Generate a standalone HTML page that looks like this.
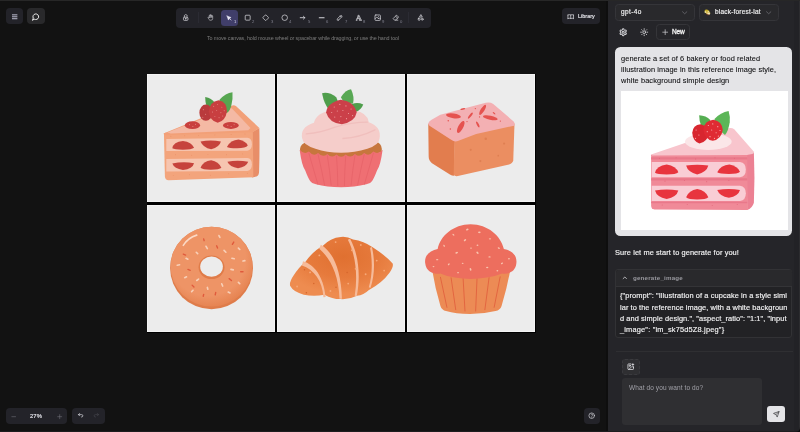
<!DOCTYPE html>
<html>
<head>
<meta charset="utf-8">
<style>
*{box-sizing:border-box;margin:0;padding:0}
html,body{width:800px;height:432px;overflow:hidden;background:#121212;font-family:"Liberation Sans",sans-serif;}
body{position:relative}
.abs{position:absolute}
#topstrip{left:0;top:0;width:800px;height:1px;background:#272727}
#canvas{left:0;top:1px;width:606px;height:431px;background:#121212}
#sep{left:606.3px;top:1px;width:1.7px;height:431px;background:#0e0e0e}
#panel{left:608px;top:1px;width:192px;height:431px;background:#252529}
#scroll{left:793.6px;top:1px;width:6.4px;height:431px;background:#222226;border-right:1.2px solid #2c2c2f}
.btn{background:#232329;border-radius:4px}
.ico{position:absolute;overflow:visible}
.t{position:absolute;white-space:nowrap;line-height:1;will-change:transform;-webkit-font-smoothing:antialiased}
#grid{left:146.5px;top:73.5px;width:389px;height:259px;background:#000}
.tile{position:absolute;width:128px;background:#ececec;box-shadow:inset 0 0 0 0.5px #fafafa}
.sel{background:#29292c;border:0.6px solid #353539;border-radius:3.5px}
.utx{font-size:7.4px;color:#0c0c0e;-webkit-text-stroke:0.08px #0c0c0e}
.ttx{font-size:7.4px;color:#f4f4f5;-webkit-text-stroke:0.15px #f4f4f5}
.kn{top:19.5px;font-size:4.2px;color:#82828f}
</style>
</head>
<body>
<div id="canvas" class="abs"></div>
<div id="topstrip" class="abs"></div>
<div id="sep" class="abs"></div>
<div id="panel" class="abs"></div>
<div id="scroll" class="abs"></div>
<div class="abs" style="left:0;top:431px;width:800px;height:1px;background:#1d1d1f"></div>
<svg class="ico" style="left:795px;top:427px;width:5px;height:5px" viewBox="0 0 5 5"><path d="M5 0 L5 5 L0 5 Q5 5 5 0Z" fill="#0c0c0c"/></svg>

<!-- top-left buttons -->
<div class="abs btn" style="left:5.8px;top:7.8px;width:17.2px;height:16.6px"></div>
<div class="abs btn" style="left:26.6px;top:7.8px;width:18.4px;height:16.6px;background:#29292b"></div>

<!-- toolbar -->
<div class="abs btn" id="toolbar" style="left:176px;top:7.7px;width:255px;height:20.3px"></div>
<div class="abs" style="left:221px;top:10px;width:17px;height:15.5px;background:#403e6a;border-radius:3.5px"></div>

<!-- hint -->
<div class="t" id="hint" style="left:206.9px;top:35.7px;font-size:5.4px;color:#7b7b7b;letter-spacing:-0.127px">To move canvas, hold mouse wheel or spacebar while dragging, or use the hand tool</div>

<!-- library -->
<div class="abs btn" style="left:562.2px;top:8px;width:37.9px;height:16.4px"></div>

<!-- grid -->
<div id="grid" class="abs">
  <div class="tile" style="left:0.5px;top:0.5px;height:128px"></div>
  <div class="tile" style="left:130.5px;top:0.5px;height:128px"></div>
  <div class="tile" style="left:260.5px;top:0.5px;height:128px"></div>
  <div class="tile" style="left:0.5px;top:131.5px;height:127px"></div>
  <div class="tile" style="left:130.5px;top:131.5px;height:127px"></div>
  <div class="tile" style="left:260.5px;top:131.5px;height:127px"></div>
</div>

<!-- bottom-left -->
<div class="abs btn" style="left:6px;top:408px;width:61px;height:16px"></div>
<div class="abs btn" style="left:72px;top:408px;width:33px;height:16px"></div>
<!-- help -->
<div class="abs btn" style="left:584px;top:408px;width:16px;height:16px"></div>


<!-- ===== right panel ===== -->
<div class="abs sel" style="left:615.2px;top:4.4px;width:79.7px;height:16.2px"></div>
<div class="t" id="m1" style="left:620.9px;top:9.2px;font-size:6.5px;color:#f0f0f0;letter-spacing:0.4px;-webkit-text-stroke:0.18px #f0f0f0">gpt-4o</div>
<div class="abs sel" style="left:699.2px;top:4.4px;width:79.7px;height:16.2px"></div>
<div class="t" id="m2" style="left:714.5px;top:9.2px;font-size:6.5px;color:#f0f0f0;letter-spacing:0.2px;-webkit-text-stroke:0.18px #f0f0f0">black-forest-lat</div>
<div class="abs sel" style="left:656.1px;top:24.4px;width:33.8px;height:15.4px;background:transparent"></div>
<div class="t" id="new" style="left:671.7px;top:28.9px;font-size:6.5px;color:#f4f4f4;letter-spacing:-0.1px;-webkit-text-stroke:0.3px #f4f4f4">New</div>

<div class="abs" id="bubble" style="left:614.9px;top:46.9px;width:177.5px;height:189.1px;background:#e4e4e7;border-radius:5.5px"></div>
<div class="t utx" id="u1" style="letter-spacing:0.087px;left:620.8px;top:54.9px">generate a set of 6 bakery or food related</div>
<div class="t utx" id="u2" style="letter-spacing:0.072px;left:620.8px;top:66px">illustration image in this reference image style,</div>
<div class="t utx" id="u3" style="letter-spacing:0.105px;left:620.8px;top:77.1px">white background simple design</div>
<div class="abs" id="refimg" style="left:620.5px;top:91.4px;width:167.3px;height:138.5px;background:#fff"></div>

<div class="t" id="sure" style="left:614.9px;top:249.3px;font-size:7.4px;color:#f4f4f5;letter-spacing:0.095px;-webkit-text-stroke:0.15px #f4f4f5">Sure let me start to generate for you!</div>

<div class="abs" id="toolbox" style="left:615.2px;top:269.4px;width:177.2px;height:68.6px;border:0.6px solid #323235;border-radius:3px;background:#222225"></div>
<div class="abs" id="toolhead" style="left:615.8px;top:270px;width:176px;height:16.6px;background:#29292c;border-radius:2.5px 2.5px 0 0;border-bottom:0.6px solid #343437"></div>
<div class="t" id="gi" style="left:632.6px;top:275px;font-size:6.2px;color:#9a9aa0;font-weight:bold;letter-spacing:0.2px">generate_image</div>
<div class="t ttx" id="j1" style="letter-spacing:0.104px;left:619.5px;top:292.4px">{"prompt": "Illustration of a cupcake in a style simi</div>
<div class="t ttx" id="j2" style="letter-spacing:0.08px;left:619.5px;top:303.5px">lar to the reference image, with a white backgroun</div>
<div class="t ttx" id="j3" style="letter-spacing:0.08px;left:619.5px;top:314.6px">d and simple design.", "aspect_ratio": "1:1", "input</div>
<div class="t ttx" id="j4" style="letter-spacing:0.186px;left:619.5px;top:325.7px">_image": "im_sk75d5Z8.jpeg"}</div>

<div class="abs" style="left:616px;top:351.4px;width:177px;height:0.7px;background:#2f2f32"></div>
<div class="abs" id="imgbtn" style="left:622.4px;top:359px;width:17.6px;height:15.8px;background:#2f2f32;border-radius:3px;border:0.5px dashed #3a3a3e"></div>
<div class="abs" id="ta" style="left:622.3px;top:378.2px;width:140px;height:46.5px;background:#2f2f32;border-radius:3px"></div>
<div class="t" id="ph" style="left:628.6px;top:384.5px;font-size:6.5px;color:#a1a1a8;letter-spacing:0.1px">What do you want to do?</div>
<div class="abs" id="send" style="left:766.5px;top:406.2px;width:18.8px;height:16.2px;background:#e4e4e7;border-radius:3px"></div>

<!--t1--><svg class="ico" style="left:157px;top:90px;width:110px;height:100px" viewBox="0 0 475 432">
  <!-- side crust -->
  <path d="M410 182 L442 164 Q444 250 441 350 Q441 370 430 374 L410 378 Z" fill="#e88e68"/>
  <!-- front face crust -->
  <path d="M30 192 Q30 186 36 185 L414 176 L416 377 L50 390 Q35 390 34 374 Z" fill="#f3a47c"/>
  <!-- top rim crust -->
  <path d="M28 188 L322 68 Q332 62 342 70 L442 164 L414 182 L34 196 Z" fill="#f2a078"/>
  <!-- top surface pink -->
  <path d="M44 184 L312 79 Q320 76 327 83 L404 164 L394 174 L60 188 Z" fill="#f4b9a4"/>
  <!-- cream layers -->
  <path d="M40 212 L390 206 Q410 208 410 234 Q410 258 390 262 L40 264 Z" fill="#f6c5b0"/>
  <path d="M40 298 L390 294 Q410 296 410 322 Q410 346 390 350 L40 352 Z" fill="#f6c5b0"/>
  <!-- strawberry halves row 1 -->
  <path d="M66 252 Q70 224 112 220 Q150 224 160 250 Q150 258 112 258 Q74 258 66 252Z" fill="#c6433c"/>
  <path d="M188 222 Q232 214 276 222 Q270 246 234 256 Q198 248 188 222Z" fill="#c6433c"/>
  <path d="M302 246 Q318 216 352 214 Q386 222 392 240 Q384 252 346 252 Q310 252 302 246Z" fill="#c6433c"/>
  <!-- row 2 -->
  <path d="M66 318 Q110 308 160 316 Q154 340 112 346 Q74 340 66 318Z" fill="#c6433c"/>
  <path d="M188 336 Q200 308 234 304 Q266 310 278 336 Q270 344 232 344 Q196 344 188 336Z" fill="#c6433c"/>
  <path d="M304 310 Q348 302 394 310 Q386 332 350 338 Q314 332 304 310Z" fill="#c6433c"/>
  <!-- top slices -->
  <ellipse cx="153" cy="152" rx="33" ry="17" fill="#c9403e"/>
  <ellipse cx="319" cy="153" rx="34" ry="15" fill="#c9403e"/>
  <g fill="#f3b4a6"><circle cx="140" cy="150" r="2"/><circle cx="155" cy="158" r="2"/><circle cx="166" cy="148" r="2"/><circle cx="306" cy="152" r="2"/><circle cx="320" cy="158" r="2"/><circle cx="333" cy="150" r="2"/></g>
  <!-- leaves -->
  <path d="M208 30 Q236 34 250 56 L244 84 L214 70 Q208 50 208 30Z" fill="#4f9c4b"/>
  <path d="M270 42 Q296 14 326 10 Q328 40 322 62 Q318 90 300 100 L272 70Z" fill="#56a650"/>
  <!-- berries -->
  <ellipse cx="211" cy="98" rx="28" ry="35" fill="#b93a3c"/>
  <path d="M224 92 Q228 50 266 44 Q302 50 302 92 Q296 134 262 142 Q228 134 224 92Z" fill="#c83f40"/>
  <g fill="#f1b3aa"><circle cx="245" cy="70" r="2"/><circle cx="262" cy="62" r="2"/><circle cx="280" cy="74" r="2"/><circle cx="240" cy="95" r="2"/><circle cx="258" cy="88" r="2"/><circle cx="276" cy="98" r="2"/><circle cx="290" cy="90" r="2"/><circle cx="250" cy="115" r="2"/><circle cx="268" cy="120" r="2"/><circle cx="284" cy="112" r="2"/><circle cx="200" cy="85" r="2"/><circle cx="210" cy="105" r="2"/><circle cx="198" cy="118" r="2"/></g>
  <!-- crumb dots -->
  <g fill="#e88a62"><circle cx="60" cy="200" r="2"/><circle cx="120" cy="198" r="2"/><circle cx="180" cy="196" r="2"/><circle cx="250" cy="194" r="2"/><circle cx="320" cy="192" r="2"/><circle cx="380" cy="190" r="2"/><circle cx="80" cy="280" r="2"/><circle cx="150" cy="282" r="2"/><circle cx="220" cy="278" r="2"/><circle cx="300" cy="280" r="2"/><circle cx="370" cy="276" r="2"/><circle cx="70" cy="370" r="2"/><circle cx="140" cy="366" r="2"/><circle cx="230" cy="368" r="2"/><circle cx="310" cy="362" r="2"/><circle cx="390" cy="360" r="2"/></g>
</svg><!--/t1-->
<!--t2--><svg class="ico" style="left:291px;top:84px;width:100px;height:110px" viewBox="0 0 393 432">
  <!-- cake -->
  <path d="M36 266 Q32 242 52 232 L342 230 Q360 240 356 266 Q300 296 197 298 Q90 296 36 266Z" fill="#c7763d"/>
  <!-- wrapper -->
  <path d="M34.0 258.0 Q52.1 280.0 70.2 265.5 Q88.3 286.6 106.4 271.1 Q124.6 291.2 142.7 274.9 Q160.8 294.1 178.9 276.8 Q197.0 295.0 215.1 276.8 Q233.2 294.1 251.3 274.9 Q269.4 291.2 287.6 271.1 Q305.7 286.6 323.8 265.5 Q341.9 280.0 360.0 258.0 Q352 320 338 340 Q326 372 318 382 Q312 392 296 394 Q250 406 197 406 Q140 406 98 394 Q82 392 76 382 Q68 372 56 340 Q42 320 34 258Z" fill="#ef6f73"/>
  <g stroke="#e45f66" stroke-width="2.5" fill="none" stroke-linecap="round"><path d="M70.2 271.5 Q90.0 340 105.7 394.5"/><path d="M106.4 277.1 Q121.1 340 131.8 396.1"/><path d="M142.7 280.9 Q152.3 340 157.9 397.7"/><path d="M178.9 282.8 Q183.4 340 184.0 399.2"/><path d="M215.1 282.8 Q210.6 340 210.0 399.2"/><path d="M251.3 280.9 Q241.7 340 236.1 397.7"/><path d="M287.6 277.1 Q272.9 340 262.2 396.1"/><path d="M323.8 271.5 Q304.0 340 288.3 394.5"/></g>
  <!-- frosting -->
  <path d="M44 214 Q34 170 90 152 Q100 112 160 104 L250 104 Q300 112 306 150 Q356 168 348 214 Q346 240 300 254 Q250 270 197 270 Q140 270 96 254 Q48 240 44 214Z" fill="#f5cdca"/>
  <path d="M60 196 Q120 190 170 170 Q240 150 300 150" stroke="#f0bfbd" stroke-width="5" fill="none" stroke-linecap="round"/>
  <path d="M204 214 Q270 210 330 180" stroke="#f0bfbd" stroke-width="5" fill="none" stroke-linecap="round"/>
  <!-- leaves -->
  <path d="M122 36 Q150 30 178 52 L190 84 L152 104 Q130 80 122 36Z" fill="#4f9e4c"/>
  <path d="M196 52 Q214 22 236 20 Q250 50 244 76 L212 80Z" fill="#58a854"/>
  <path d="M240 78 Q262 70 284 80 Q276 102 252 110 L236 100Z" fill="#4f9e4c"/>
  <!-- strawberry -->
  <path d="M138 112 Q142 74 196 62 Q250 70 258 112 Q252 148 200 158 Q150 154 138 112Z" fill="#cb4049"/>
  <g fill="#eea0a0"><circle cx="170" cy="90" r="2.2"/><circle cx="192" cy="80" r="2.2"/><circle cx="216" cy="86" r="2.2"/><circle cx="236" cy="98" r="2.2"/><circle cx="160" cy="112" r="2.2"/><circle cx="182" cy="106" r="2.2"/><circle cx="204" cy="104" r="2.2"/><circle cx="226" cy="116" r="2.2"/><circle cx="172" cy="130" r="2.2"/><circle cx="196" cy="128" r="2.2"/><circle cx="218" cy="136" r="2.2"/><circle cx="242" cy="124" r="2.2"/><circle cx="190" cy="146" r="2.2"/></g>
</svg><!--/t2-->
<!--t3--><svg class="ico" style="left:417px;top:94px;width:110px;height:90px" viewBox="0 0 528 432">
  <!-- left face -->
  <path d="M54 142 L182 226 L178 392 Q168 392 158 386 L72 332 Q56 320 56 300 Z" fill="#e27d4e"/>
  <!-- front face -->
  <path d="M180 224 L282 188 L468 142 L462 318 Q460 332 442 338 L196 394 Q180 396 176 388 Z" fill="#eb8e61"/>
  <!-- pink top -->
  <path d="M54 142 Q56 132 70 124 L112 100 L330 42 Q352 38 366 48 L464 132 Q472 142 466 152 L284 192 L196 226 Q180 232 164 220 L60 152 Q54 148 54 142Z" fill="#f3b0b3"/>
  <!-- sprinkles -->
  <g fill="#e5524f">
    <ellipse cx="175" cy="105" rx="36" ry="11" transform="rotate(8 175 105)"/>
    <ellipse cx="210" cy="158" rx="32" ry="12" transform="rotate(-62 210 158)"/>
    <ellipse cx="315" cy="76" rx="28" ry="9" transform="rotate(-58 315 76)"/>
    <ellipse cx="352" cy="114" rx="36" ry="10" transform="rotate(12 352 114)"/>
    <ellipse cx="256" cy="104" rx="18" ry="5" transform="rotate(-52 256 104)"/>
    <ellipse cx="292" cy="146" rx="16" ry="5" transform="rotate(62 292 146)"/>
    <ellipse cx="220" cy="72" rx="12" ry="4" transform="rotate(-10 220 72)"/>
    <ellipse cx="370" cy="92" rx="8" ry="3" transform="rotate(40 370 92)"/>
    <circle cx="150" cy="128" r="3.5"/><circle cx="160" cy="168" r="3.5"/><circle cx="240" cy="132" r="3"/><circle cx="300" cy="110" r="3"/><circle cx="400" cy="130" r="3"/><circle cx="280" cy="70" r="3"/>
  </g>
  <g fill="#df7f52"><circle cx="330" cy="215" r="6"/><circle cx="258" cy="268" r="5"/><circle cx="418" cy="238" r="5"/><circle cx="304" cy="322" r="5"/><circle cx="390" cy="296" r="4"/></g>
</svg><!--/t3-->
<!--t4--><svg class="ico" style="left:162px;top:218px;width:100px;height:100px" viewBox="0 0 432 432">
  <defs><radialGradient id="dg" cx="0.45" cy="0.4" r="0.62"><stop offset="0.75" stop-color="#ee9466"/><stop offset="1" stop-color="#e58250"/></radialGradient></defs>
  <ellipse cx="214" cy="216" rx="179" ry="178" fill="#df7c4a"/>
  <ellipse cx="214" cy="210" rx="177" ry="172" fill="url(#dg)"/>
  <ellipse cx="214" cy="213" rx="56" ry="51" fill="#e07c49"/>
  <ellipse cx="214" cy="210" rx="49" ry="44" fill="#ececec"/>
  <path d="M92 118 Q112 86 150 74" stroke="#fbd9c6" stroke-width="7" fill="none" stroke-linecap="round"/>
  <g stroke="#f8d0b8" stroke-width="7" stroke-linecap="round">
    <path d="M190 122 l6 10"/><path d="M246 76 l4 8"/><path d="M268 140 l8 8"/><path d="M302 174 l10 2"/><path d="M298 222 l10 2"/><path d="M258 284 l4 10"/><path d="M150 270 l8 -6"/><path d="M98 258 l8 -4"/><path d="M66 204 l10 -2"/><path d="M128 318 l6 -6"/><path d="M196 300 l2 8"/><path d="M286 320 l8 4"/><path d="M330 278 l6 6"/><path d="M350 186 l8 -2"/><path d="M148 148 l6 6"/><path d="M104 174 l8 4"/><path d="M330 130 l6 6"/>
  </g>
  <g stroke="#e05a3c" stroke-width="6" stroke-linecap="round">
    <path d="M236 120 l4 10"/><path d="M310 104 l-6 10"/><path d="M92 156 l10 4"/><path d="M112 222 l10 4"/><path d="M290 262 l10 8"/><path d="M232 322 l-2 10"/><path d="M130 290 l8 8"/><path d="M180 90 l2 8"/><path d="M340 232 l10 0"/><path d="M180 330 l-2 8"/>
  </g>
</svg><!--/t4-->
<!--t5--><svg class="ico" style="left:286px;top:228px;width:110px;height:80px" viewBox="0 0 594 432">
  <defs><radialGradient id="cg" cx="0.52" cy="0.32" r="0.6"><stop offset="0" stop-color="#e07030"/><stop offset="0.55" stop-color="#e67a3c"/><stop offset="1" stop-color="#ee8c50"/></radialGradient></defs>
  <path d="M22 312 Q18 290 40 258 Q70 210 102 186 Q150 120 196 98 Q240 52 296 48 Q330 44 362 62 Q420 70 468 104 Q540 150 576 192 Q582 210 560 240 Q520 296 446 336 Q420 362 384 366 Q340 388 292 384 Q250 384 208 360 Q150 372 96 360 Q40 346 22 312Z" fill="url(#cg)"/>
  <g fill="#f6bb9a">
    <path d="M92 180 C152 198 202 258 214 372 L202 374 C198 284 150 224 86 202 Z"/>
    <path d="M188 90 C254 128 298 228 302 382 L289 382 C284 252 240 164 180 112 Z"/>
    <path d="M346 58 C392 140 404 260 382 368 L371 366 C388 260 378 150 334 64 Z"/>
    <path d="M464 102 C482 180 478 260 456 324 L447 320 C466 260 468 180 454 106 Z"/>
  </g>
  <g fill="#f6a878"><circle cx="180" cy="148" r="5"/><circle cx="268" cy="76" r="5"/><circle cx="356" cy="120" r="5"/><circle cx="404" cy="92" r="5"/><circle cx="490" cy="176" r="5"/><circle cx="376" cy="220" r="5"/><circle cx="130" cy="240" r="5"/><circle cx="60" cy="316" r="5"/><circle cx="240" cy="340" r="5"/><circle cx="336" cy="300" r="5"/><circle cx="430" cy="250" r="5"/><circle cx="530" cy="230" r="5"/></g>
  <g fill="#d4652c"><circle cx="100" cy="226" r="4"/><circle cx="150" cy="300" r="4"/><circle cx="330" cy="240" r="4"/><circle cx="270" cy="320" r="4"/><circle cx="110" cy="350" r="4"/></g>
</svg><!--/t5-->
<!--t6--><svg class="ico" style="left:421px;top:218px;width:100px;height:100px" viewBox="0 0 432 432">
  <!-- wrapper -->
  <path d="M48 224 L386 224 Q372 300 348 380 Q342 398 322 402 Q270 415 212 415 Q150 415 108 402 Q90 398 84 380 Q60 300 48 224Z" fill="#ec8b55"/>
  <g stroke="#e2623f" stroke-width="4" fill="none" stroke-linecap="round"><path d="M84 256 L112 386"/><path d="M130 258 L150 396"/><path d="M182 262 L190 402"/><path d="M242 262 L236 402"/><path d="M294 258 L276 396"/><path d="M342 254 L316 386"/></g>
  <!-- top -->
  <path d="M18 194 C14 160 40 140 72 134 C84 76 140 28 214 27 C290 28 344 76 358 134 C392 140 416 160 412 196 C408 236 372 244 350 240 C310 256 260 263 214 263 C170 263 120 256 84 240 C60 244 22 236 18 194 Z" fill="#ed6e5e"/>
  <g fill="#f9c3ad">
    <ellipse cx="200" cy="50" rx="6" ry="3.5" transform="rotate(-30 200 50)"/><ellipse cx="252" cy="62" rx="6" ry="3.5"/><ellipse cx="140" cy="72" rx="5" ry="3" transform="rotate(40 140 72)"/><ellipse cx="190" cy="96" rx="6" ry="3.5" transform="rotate(-40 190 96)"/><ellipse cx="298" cy="90" rx="5" ry="3"/><ellipse cx="100" cy="120" rx="5" ry="3" transform="rotate(60 100 120)"/><ellipse cx="244" cy="118" rx="4" ry="3"/><ellipse cx="336" cy="130" rx="5" ry="3" transform="rotate(30 336 130)"/><ellipse cx="154" cy="150" rx="6" ry="3.5" transform="rotate(-20 154 150)"/><ellipse cx="216" cy="130" rx="4" ry="3"/><ellipse cx="244" cy="150" rx="6" ry="4" transform="rotate(50 244 150)"/><ellipse cx="296" cy="168" rx="5" ry="3"/><ellipse cx="70" cy="180" rx="5" ry="3"/><ellipse cx="120" cy="200" rx="5" ry="3" transform="rotate(-50 120 200)"/><ellipse cx="180" cy="196" rx="4" ry="3"/><ellipse cx="214" cy="222" rx="6" ry="3.5" transform="rotate(70 214 222)"/><ellipse cx="286" cy="214" rx="5" ry="3"/><ellipse cx="350" cy="196" rx="5" ry="3" transform="rotate(-30 350 196)"/><ellipse cx="380" cy="176" rx="4" ry="3"/><ellipse cx="54" cy="210" rx="4" ry="3"/><ellipse cx="160" cy="236" rx="4" ry="3"/><ellipse cx="330" cy="228" rx="4" ry="3"/>
  </g>
</svg><!--/t6-->
<!--t7--><svg class="ico" style="left:640px;top:100px;width:130px;height:120px" viewBox="0 0 468 432">
  <!-- side -->
  <path d="M384 196 L410 188 Q414 280 410 370 Q404 390 386 396 Z" fill="#ec8193"/>
  <!-- front sponge -->
  <path d="M40 200 Q40 194 48 194 L386 194 L388 396 L52 394 Q40 392 40 380 Z" fill="#f08a98"/>
  <!-- top -->
  <path d="M40 196 L318 102 Q330 98 340 106 L410 186 Q412 192 404 194 L384 198 L44 200 Z" fill="#f8c5cd"/>
  <!-- cream blob -->
  <ellipse cx="246" cy="150" rx="84" ry="30" fill="#fbe6e8"/>
  <!-- cream layers -->
  <path d="M40 206 L386 206 L386 214 L40 214Z" fill="#e9788a"/><path d="M40 282 L386 282 L386 290 L40 290Z" fill="#e9788a"/><path d="M40 366 L386 366 L386 372 L40 372Z" fill="#e9788a"/><path d="M42 223 L360 223 Q381 225 381 250 Q381 276 360 278 L42 278 Z" fill="#f9cdd5"/>
  <path d="M42 309 L360 309 Q381 311 381 336 Q381 362 360 364 L42 364 Z" fill="#f9cdd5"/>
  <!-- strawberries row 1 -->
  <path d="M54 262 Q60 236 96 232 Q130 238 138 260 Q130 268 96 268 Q62 268 54 262Z" fill="#e8343e"/>
  <path d="M166 236 Q206 230 246 236 Q240 260 206 268 Q172 260 166 236Z" fill="#e8343e"/>
  <path d="M278 260 Q290 234 322 232 Q352 238 360 258 Q352 266 320 266 Q286 266 278 260Z" fill="#e8343e"/>
  <!-- row 2 -->
  <path d="M54 326 Q96 318 138 326 Q132 350 96 356 Q60 350 54 326Z" fill="#e8343e"/>
  <path d="M166 350 Q176 324 206 320 Q236 324 246 350 Q238 358 206 358 Q174 358 166 350Z" fill="#e8343e"/>
  <path d="M278 324 Q320 316 360 324 Q354 346 320 352 Q286 346 278 324Z" fill="#e8343e"/>
  <!-- leaves -->
  <path d="M213 55 Q238 56 253 72 L248 96 L220 92 Q213 76 213 55Z" fill="#55ae52"/>
  <path d="M268 68 Q290 46 319 40 Q325 60 323 80 Q318 112 306 126 L272 96Z" fill="#5cb658"/>
  <!-- berries -->
  <path d="M188 118 Q190 90 218 87 Q246 92 247 122 Q242 150 214 157 Q190 148 188 118Z" fill="#d8262f"/>
  <path d="M228 106 Q232 74 264 71 Q296 76 298 108 Q293 141 262 147 Q232 141 228 106Z" fill="#e02a33"/>
  <g fill="#f7b9b9"><circle cx="246" cy="92" r="2"/><circle cx="262" cy="86" r="2"/><circle cx="280" cy="96" r="2"/><circle cx="242" cy="114" r="2"/><circle cx="258" cy="108" r="2"/><circle cx="274" cy="118" r="2"/><circle cx="288" cy="110" r="2"/><circle cx="252" cy="132" r="2"/><circle cx="268" cy="138" r="2"/><circle cx="282" cy="130" r="2"/><circle cx="202" cy="108" r="2"/><circle cx="212" cy="126" r="2"/><circle cx="200" cy="138" r="2"/></g>
  <g fill="#e56a7e"><circle cx="70" cy="210" r="2"/><circle cx="130" cy="208" r="2"/><circle cx="200" cy="212" r="2"/><circle cx="270" cy="208" r="2"/><circle cx="340" cy="210" r="2"/><circle cx="90" cy="292" r="2"/><circle cx="160" cy="290" r="2"/><circle cx="240" cy="294" r="2"/><circle cx="320" cy="290" r="2"/><circle cx="80" cy="378" r="2"/><circle cx="170" cy="376" r="2"/><circle cx="260" cy="380" r="2"/><circle cx="350" cy="376" r="2"/></g>
</svg><!--/t7-->
<!--icons--><div id="icons">
<!-- hamburger -->
<svg class="ico" style="left:10.8px;top:12.8px;width:7.4px;height:7.4px" viewBox="0 0 24 24" fill="none" stroke="#bdbdd0" stroke-width="3.2" stroke-linecap="round"><path d="M4.5 6h15M4.500 12.300h15M4.500 18.600h15"/></svg>
<!-- chat -->
<svg class="ico" style="left:31.600px;top:12.500px;width:7.600px;height:7.600px" viewBox="0 0 24 24" fill="none" stroke="#f4f4f4" stroke-width="3" stroke-linecap="round" stroke-linejoin="round"><path d="M7.900 20A9 9 0 1 0 4 16.100L2 22Z"/></svg>
<!-- lock -->
<svg class="ico" style="left:182.100px;top:14.300px;width:7.4px;height:7.4px" viewBox="0 0 20 20" fill="none" stroke="#d6d6dc" stroke-width="2" stroke-linecap="round" stroke-linejoin="round"><path d="M13.542 8.542H6.458a2.500 2.500 0 0 0-2.500 2.500v3.750a2.500 2.500 0 0 0 2.500 2.500h7.084a2.500 2.500 0 0 0 2.500-2.500v-3.750a2.500 2.500 0 0 0-2.500-2.500Z"/><circle cx="10" cy="12.900" r="1" fill="#d6d6dc"/><path d="M6.400 8.500V5.175c0-.930.400-1.823 1.116-2.480a3.981 3.981 0 0 1 2.693-1.028c1.010 0 1.980.370 2.694 1.027.715.658 1.116 1.550 1.116 2.481"/></svg>
<!-- hand -->
<svg class="ico" style="left:206.900px;top:14.300px;width:6.800px;height:6.800px" viewBox="0 0 24 24" fill="none" stroke="#d6d6dc" stroke-width="2" stroke-linecap="round" stroke-linejoin="round"><path d="M8 13v-7.500a1.500 1.500 0 0 1 3 0v6.500"/><path d="M11 5.500v-2a1.500 1.500 0 1 1 3 0v8.500"/><path d="M14 5.500a1.500 1.500 0 0 1 3 0v6.500"/><path d="M17 7.500a1.500 1.500 0 0 1 3 0v8.500a6 6 0 0 1 -6 6h-2h.208a6 6 0 0 1 -5.012 -2.700a69.740 69.740 0 0 1 -.196 -.3c-.312 -.479 -1.407 -2.388 -3.286 -5.728a1.500 1.500 0 0 1 .536 -2.022a1.867 1.867 0 0 1 2.280 .280l1.470 1.470"/></svg>
<!-- pointer -->
<svg class="ico" style="left:225.200px;top:14.200px;width:7.4px;height:7.4px" viewBox="0 0 22 22" fill="#e8e8f4" stroke="#e8e8f4" stroke-width="1.600" stroke-linecap="round" stroke-linejoin="round"><path d="M6 6l4.153 11.793a0.365 .365 0 0 0 .331 .207a0.366 .366 0 0 0 .332 -.207l2.184 -4.793l4.787 -1.994a0.355 .355 0 0 0 .213 -.323a0.355 .355 0 0 0 -.213 -.323l-11.787 -4.360z"/><path d="M13.500 13.500l4.500 4.500" stroke-width="2.200"/></svg>
<!-- rect -->
<svg class="ico" style="left:243.800px;top:14.100px;width:7.4px;height:7.4px" viewBox="0 0 24 24" fill="none" stroke="#d6d6dc" stroke-width="2.400" stroke-linejoin="round"><rect x="4" y="4" width="16" height="16" rx="2.500"/></svg>
<!-- diamond -->
<svg class="ico" style="left:262.200px;top:14.100px;width:7.4px;height:7.4px" viewBox="0 0 24 24" fill="none" stroke="#d6d6dc" stroke-width="2.400" stroke-linejoin="round"><path d="M10.500 20.400l-6.900 -6.900c-.781 -.781 -.781 -2.219 0 -3l6.900 -6.900c.781 -.781 2.219 -.781 3 0l6.900 6.900c.781 .781 .781 2.219 0 3l-6.900 6.900c-.781 .781 -2.219 .781 -3 0z"/></svg>
<!-- ellipse -->
<svg class="ico" style="left:280.800px;top:14.100px;width:7.4px;height:7.4px" viewBox="0 0 24 24" fill="none" stroke="#d6d6dc" stroke-width="2.400"><circle cx="12" cy="12" r="9"/></svg>
<!-- arrow -->
<svg class="ico" style="left:299.400px;top:14.100px;width:7.4px;height:7.4px" viewBox="0 0 24 24" fill="none" stroke="#d6d6dc" stroke-width="2.800" stroke-linecap="round" stroke-linejoin="round"><path d="M4 12h15M14.500 7.500L19 12l-4.500 4.500"/></svg>
<!-- line -->
<svg class="ico" style="left:318.200px;top:14.100px;width:7.4px;height:7.4px" viewBox="0 0 20 20" fill="none" stroke="#d6d6dc" stroke-width="3" stroke-linecap="round"><path d="M3.500 10h13"/></svg>
<!-- pencil -->
<svg class="ico" style="left:336.300px;top:14.100px;width:7.4px;height:7.4px" viewBox="0 0 20 20" fill="none" stroke="#d6d6dc" stroke-width="2" stroke-linecap="round" stroke-linejoin="round"><path d="m7.643 15.690 7.774-7.773a2.357 2.357 0 1 0-3.334-3.334L4.310 12.357a3.333 3.333 0 0 0-.977 2.357v1.953h1.953c.884 0 1.732-.352 2.357-.977Z"/><path d="m11.250 5.417 3.333 3.333"/></svg>
<!-- text -->
<svg class="ico" style="left:355.200px;top:14.100px;width:7.4px;height:7.4px" viewBox="0 0 24 24" fill="none" stroke="#d6d6dc" stroke-width="2.400" stroke-linecap="round" stroke-linejoin="round"><path d="M4 20h3M14 20h7M6.900 15h6.900M10.200 6.300L16 20"/><path d="M5 20L11 4h2l7 16"/></svg>
<!-- image -->
<svg class="ico" style="left:373.800px;top:14.100px;width:7.4px;height:7.4px" viewBox="0 0 20 20" fill="none" stroke="#d6d6dc" stroke-width="2" stroke-linecap="round" stroke-linejoin="round"><path d="M12.500 6.667h.01"/><path d="M4.910 2.625h10.180a2.284 2.284 0 0 1 2.285 2.284v10.182a2.284 2.284 0 0 1-2.284 2.284H4.909a2.284 2.284 0 0 1-2.284-2.284V4.909a2.284 2.284 0 0 1 2.284-2.284Z"/><path d="m3.333 12.500 3.334-3.333c.773-.745 1.726-.745 2.500 0l4.166 4.166"/><path d="m11.667 11.667.833-.834c.774-.744 1.726-.744 2.500 0l1.667 1.667"/></svg>
<!-- eraser -->
<svg class="ico" style="left:392.300px;top:14.100px;width:7.4px;height:7.4px" viewBox="0 0 24 24" fill="none" stroke="#d6d6dc" stroke-width="2.400" stroke-linecap="round" stroke-linejoin="round"><path d="M19 20h-10.500l-4.210 -4.300a1 1 0 0 1 0 -1.410l10 -10a1 1 0 0 1 1.410 0l5 5a1 1 0 0 1 0 1.410l-9.200 9.300"/><path d="M18 13.300l-6.300 -6.300"/></svg>
<!-- shapes -->
<svg class="ico" style="left:416.800px;top:14.100px;width:7.4px;height:7.4px" viewBox="0 0 24 24" fill="none" stroke="#d6d6dc" stroke-width="2.400" stroke-linecap="round" stroke-linejoin="round"><path d="M12 3l-4 7h8z"/><circle cx="17" cy="17" r="3"/><rect x="4" y="14" width="6" height="6" rx="1"/></svg>
<!-- separators -->
<div class="abs" style="left:198px;top:12.200px;width:0.7px;height:11.200px;background:#2b2b33"></div>
<div class="abs" style="left:408.200px;top:12.200px;width:0.7px;height:11.200px;background:#2b2b33"></div>
<!-- key numbers -->
<div class="t kn" style="left:233.800px;color:#d8d8e8">1</div>
<div class="t kn" style="left:252.400px">2</div>
<div class="t kn" style="left:270.700px">3</div>
<div class="t kn" style="left:289.200px">4</div>
<div class="t kn" style="left:307.600px">5</div>
<div class="t kn" style="left:326px">6</div>
<div class="t kn" style="left:344.500px">7</div>
<div class="t kn" style="left:363px">8</div>
<div class="t kn" style="left:381.500px">9</div>
<div class="t kn" style="left:400px">0</div>
<!-- library -->
<svg class="ico" style="left:566.800px;top:12.800px;width:7.4px;height:7.4px" viewBox="0 0 24 24" fill="none" stroke="#d6d6dc" stroke-width="2.400" stroke-linecap="round" stroke-linejoin="round"><path d="M3 18a9 9 0 0 1 9 0a9 9 0 0 1 9 0"/><path d="M3 6.500a9 9 0 0 1 9 0a9 9 0 0 1 9 0"/><path d="M3 6.500v11.500M12 6.500v11.500M21 6.500v11.500"/></svg>
<div class="t" id="lib" style="left:578.400px;top:14.100px;font-size:5.400px;color:#e0e0e6;letter-spacing:0.040px;-webkit-text-stroke:0.18px #e0e0e6">Library</div>
<!-- select chevrons -->
<svg class="ico" style="left:681.200px;top:8.800px;width:7.4px;height:7.4px" viewBox="0 0 24 24" fill="none" stroke="#707078" stroke-width="2.400" stroke-linecap="round" stroke-linejoin="round"><path d="m5 9 7 6.500 7-6.500"/></svg>
<svg class="ico" style="left:765.200px;top:8.800px;width:7.4px;height:7.4px" viewBox="0 0 24 24" fill="none" stroke="#707078" stroke-width="2.400" stroke-linecap="round" stroke-linejoin="round"><path d="m5 9 7 6.500 7-6.500"/></svg>
<!-- provider emoji -->
<svg class="ico" style="left:704.300px;top:9.200px;width:7px;height:6.400px" viewBox="0 0 70 64"><ellipse cx="30" cy="26" rx="26" ry="20" fill="#c4ad2c" transform="rotate(20 30 26)"/><ellipse cx="42" cy="40" rx="22" ry="16" fill="#d8c060" transform="rotate(20 42 40)"/><ellipse cx="48" cy="46" rx="12" ry="9" fill="#efe4c4"/><circle cx="46" cy="24" r="5" fill="#f2e9a8"/><ellipse cx="14" cy="30" rx="7" ry="10" fill="#e6dca0"/><path d="M18 50 Q34 62 50 58" stroke="#7a2a20" stroke-width="5" fill="none"/></svg>
<!-- settings -->
<svg class="ico" style="left:619.400px;top:28px;width:8.400px;height:8.400px" viewBox="0 0 24 24" fill="none" stroke="#d4d4d8" stroke-width="2.900" stroke-linecap="round" stroke-linejoin="round"><path d="M12.220 2h-.44a2 2 0 0 0-2 2v.18a2 2 0 0 1-1 1.730l-.43.250a2 2 0 0 1-2 0l-.15-.08a2 2 0 0 0-2.730.73l-.22.380a2 2 0 0 0 .73 2.730l.15.100a2 2 0 0 1 1 1.720v.51a2 2 0 0 1-1 1.740l-.15.090a2 2 0 0 0-.73 2.730l.22.380a2 2 0 0 0 2.730.73l.15-.08a2 2 0 0 1 2 0l.43.250a2 2 0 0 1 1 1.730V20a2 2 0 0 0 2 2h.44a2 2 0 0 0 2-2v-.18a2 2 0 0 1 1-1.730l.43-.250a2 2 0 0 1 2 0l.15.080a2 2 0 0 0 2.730-.73l.22-.390a2 2 0 0 0-.73-2.730l-.15-.080a2 2 0 0 1-1-1.740v-.5a2 2 0 0 1 1-1.740l.15-.090a2 2 0 0 0 .73-2.730l-.22-.380a2 2 0 0 0-2.730-.73l-.15.080a2 2 0 0 1-2 0l-.43-.250a2 2 0 0 1-1-1.730V4a2 2 0 0 0-2-2z"/><circle cx="12" cy="12" r="3"/></svg>
<!-- sun -->
<svg class="ico" style="left:639.600px;top:28px;width:8.400px;height:8.400px" viewBox="0 0 24 24" fill="none" stroke="#d4d4d8" stroke-width="2.500" stroke-linecap="round" stroke-linejoin="round"><circle cx="12" cy="12" r="4"/><path d="M12 2v2M12 20v2M4.930 4.930l1.410 1.410M17.660 17.660l1.410 1.410M2 12h2M20 12h2M6.340 17.660l-1.410 1.410M19.070 4.930l-1.410 1.410"/></svg>
<!-- plus -->
<svg class="ico" style="left:660.500px;top:28.300px;width:8.400px;height:8.400px" viewBox="0 0 24 24" fill="none" stroke="#d8d8dc" stroke-width="1.900" stroke-linecap="round"><path d="M5 12h14M12 5v14"/></svg>
<!-- tool chevron up -->
<svg class="ico" style="left:621.700px;top:275.400px;width:5.600px;height:5.600px" viewBox="0 0 24 24" fill="none" stroke="#e4e4e8" stroke-width="3.200" stroke-linecap="round" stroke-linejoin="round"><path d="m5 15.500 7-7 7 7"/></svg>
<!-- image plus -->
<svg class="ico" style="left:627.400px;top:363.200px;width:7.400px;height:7.400px" viewBox="0 0 24 24" fill="none" stroke="#ececf0" stroke-width="2.400" stroke-linecap="round" stroke-linejoin="round"><path d="M16 5h6M19 2v6"/><path d="M21 11.500V19a2 2 0 0 1-2 2H5a2 2 0 0 1-2-2V5a2 2 0 0 1 2-2h7.500"/><path d="m21 15-3.086-3.086a2 2 0 0 0-2.828 0L6 21"/><circle cx="9" cy="9" r="2"/></svg>
<!-- send -->
<svg class="ico" style="left:772.600px;top:411px;width:6.600px;height:6.600px" viewBox="0 0 24 24" fill="none" stroke="#1a1a1e" stroke-width="2.200" stroke-linecap="round" stroke-linejoin="round"><path d="M14.536 21.686a.5.500 0 0 0 .937-.024l6.500-19a.496.496 0 0 0-.635-.635l-19 6.500a.5.500 0 0 0-.024.937l7.930 3.180a2 2 0 0 1 1.112 1.110z"/><path d="m21.854 2.147-10.940 10.939"/></svg>
<!-- zoom -->
<svg class="ico" style="left:10.300px;top:412.700px;width:7.400px;height:7.400px" viewBox="0 0 20 20" fill="none" stroke="#767680" stroke-width="1.500" stroke-linecap="round"><path d="M5 10h10"/></svg>
<svg class="ico" style="left:55.500px;top:412.700px;width:7.400px;height:7.400px" viewBox="0 0 20 20" fill="none" stroke="#767680" stroke-width="1.500" stroke-linecap="round"><path d="M10 4.500v11M4.500 10h11"/></svg>
<div class="t" id="zp" style="left:30.400px;top:414.200px;font-size:5.800px;color:#e4e4ea;letter-spacing:0.100px;-webkit-text-stroke:0.15px #e4e4ea">27%</div>
<!-- undo redo -->
<svg class="ico" style="left:76.600px;top:412.400px;width:7px;height:7px" viewBox="0 0 20 20" fill="none" stroke="#e0e0e6" stroke-width="1.900" stroke-linecap="round" stroke-linejoin="round"><path d="M7.500 10.833 4.167 7.500 7.500 4.167M4.167 7.500h9.166a3.333 3.333 0 0 1 0 6.667H12.500"/></svg>
<svg class="ico" style="left:93.200px;top:412.400px;width:7px;height:7px" viewBox="0 0 20 20" fill="none" stroke="#45454d" stroke-width="1.900" stroke-linecap="round" stroke-linejoin="round"><path d="M12.500 10.833 15.833 7.500 12.500 4.167M15.833 7.500H6.667a3.333 3.333 0 1 0 0 6.667H7.500"/></svg>
<!-- help -->
<svg class="ico" style="left:588.300px;top:412.300px;width:7.400px;height:7.400px" viewBox="0 0 24 24" fill="none" stroke="#d6d6dc" stroke-width="2.200" stroke-linecap="round" stroke-linejoin="round"><circle cx="12" cy="12" r="9"/><path d="M12 17v.01"/><path d="M12 13.500a1.500 1.500 0 0 1 1 -1.500a2.600 2.600 0 1 0 -3 -4"/></svg>
</div><!--/icons-->
</body>
</html>
